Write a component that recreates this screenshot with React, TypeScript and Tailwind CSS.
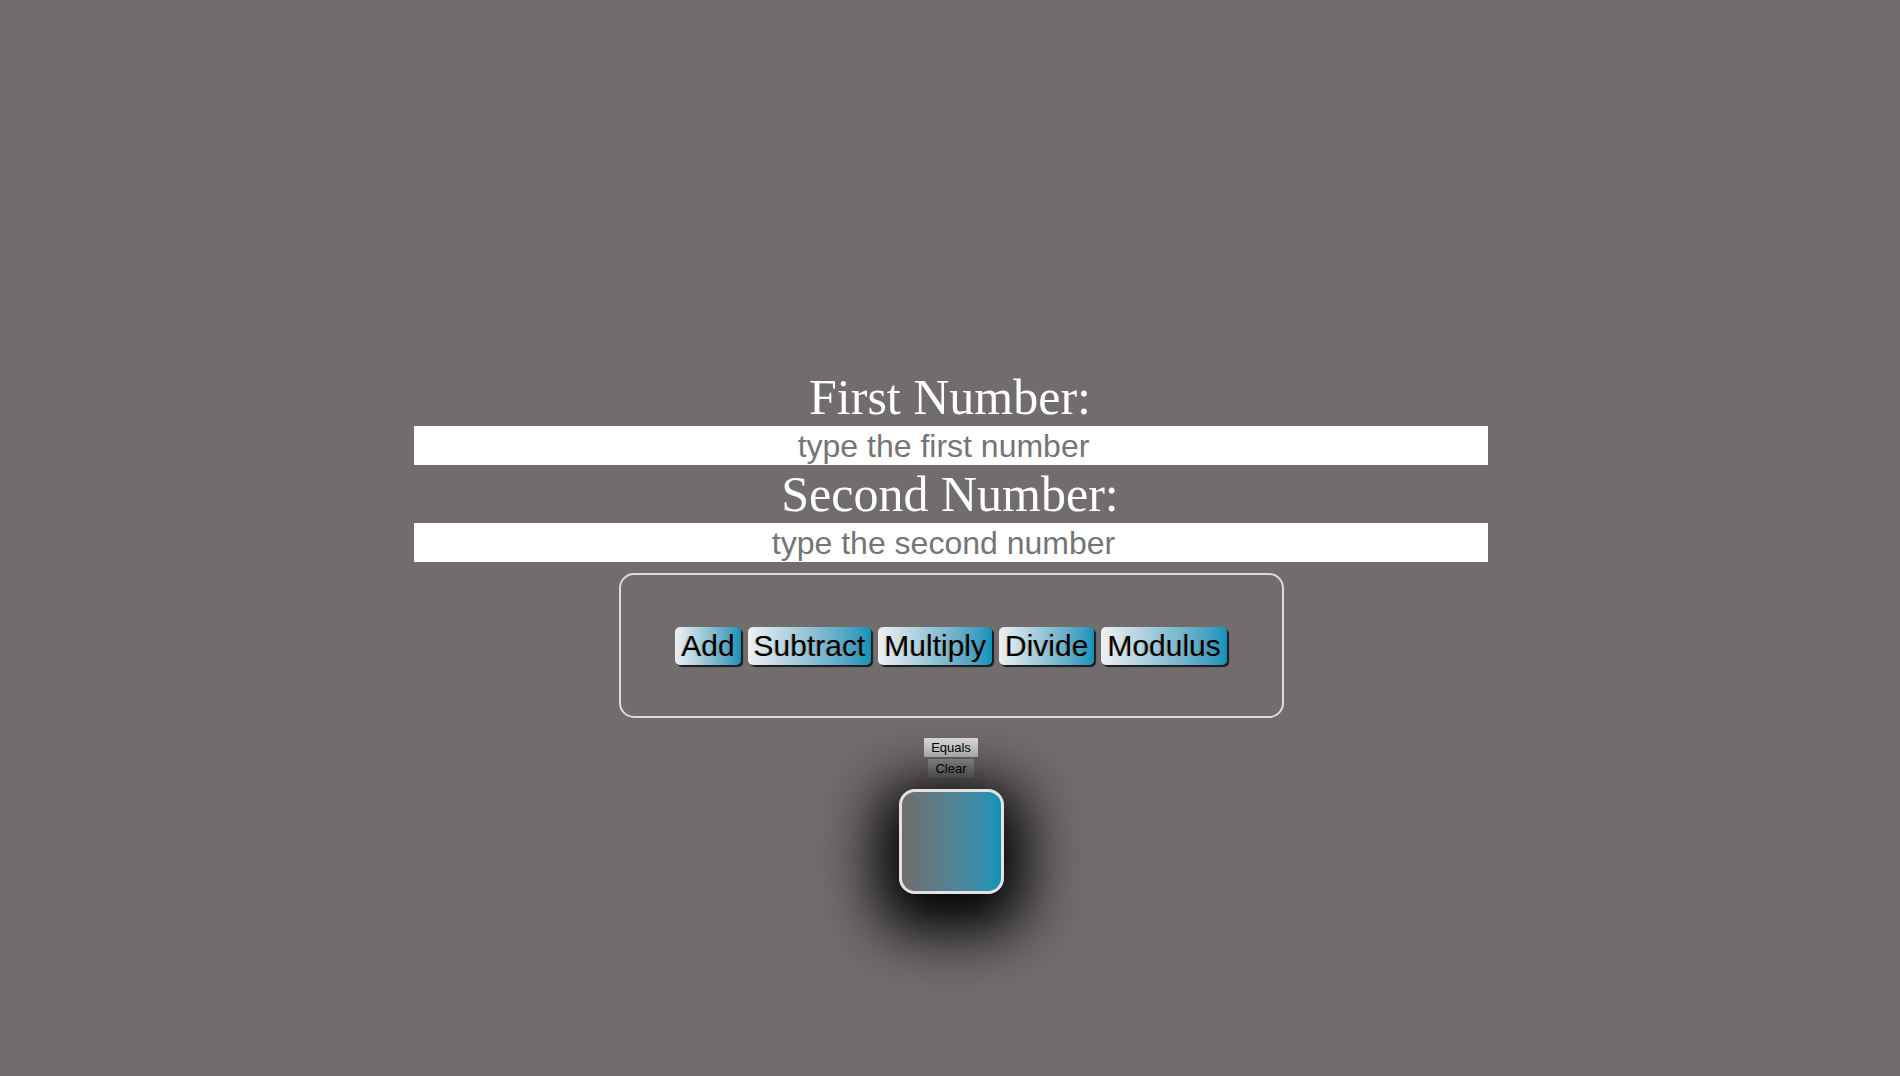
import React from "react";

const ops = ["Add", "Subtract", "Multiply", "Divide", "Modulus"];

const Calculator: React.FC = () => {
  return (
    <div className="min-h-screen w-full bg-[#716d6c] pt-[368px] flex flex-col items-center font-['Liberation_Sans',Arial,sans-serif]">
      {/* number inputs */}
      <h1 className="text-[50px] leading-[58px] text-white font-['Liberation_Serif','Times_New_Roman',serif]">
        First Number:
      </h1>
      <input
        type="number"
        placeholder="type the first number"
        className="ml-[2px] w-[1074px] h-[39px] bg-white border-0 outline-none text-center text-[32px] text-black placeholder:text-[#757575]"
      />
      <h1 className="text-[50px] leading-[58px] text-white font-['Liberation_Serif','Times_New_Roman',serif]">
        Second Number:
      </h1>
      <input
        type="number"
        placeholder="type the second number"
        className="ml-[2px] w-[1074px] h-[39px] bg-white border-0 outline-none text-center text-[32px] text-black placeholder:text-[#757575]"
      />

      {/* operation buttons */}
      <div className="mt-[11px] ml-[2px] w-[665px] h-[145px] border-2 border-[#dcdcdc] rounded-[15px] flex items-center justify-center gap-[7px]">
        {ops.map((op) => (
          <button
            key={op}
            className="h-[38px] px-[6px] rounded-[5px] text-[30px] leading-[34px] text-black bg-gradient-to-r from-[#eef1f2] to-[#0793b8] shadow-[2px_2px_1px_rgba(0,0,0,0.75)] [text-shadow:-1px_0_0_rgba(150,80,0,0.35)]"
          >
            {op}
          </button>
        ))}
      </div>

      <button className="mt-[20px] ml-[2px] h-[19px] px-[7px] text-[13px] leading-[15px] text-black bg-gradient-to-b from-[#e2e2e2] to-[#c6c6c6] rounded-[1px]">
        Equals
      </button>
      <button className="mt-[2px] ml-[2px] h-[19px] px-[7px] text-[13px] leading-[15px] text-black bg-gradient-to-b from-[#9a9a9a] to-[#7c7c7c] rounded-[1px]">
        Clear
      </button>

      {/* result */}
      <div className="mt-[11px] ml-[2px] w-[105px] h-[105px] rounded-[16px] border-[3px] border-[#e2e2e2] bg-gradient-to-r from-[#6e6e6e] to-[#0794b9] shadow-[0_16px_60px_22px_#000]" />
    </div>
  );
};

export default Calculator;
